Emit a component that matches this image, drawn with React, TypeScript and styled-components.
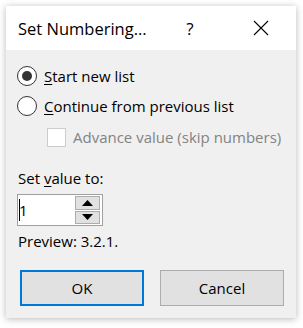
import React from 'react';
import styled, { createGlobalStyle } from 'styled-components';

const GlobalStyle = createGlobalStyle`
  html, body {
    margin: 0;
    padding: 0;
    background: #ffffff;
  }
  body {
    font-family: "Open Sans", "Noto Sans", sans-serif;
    color: #000000;
    line-height: 20px;
  }
`;

const Underline: React.FC<{ children: React.ReactNode }> = ({ children }) => (
  <AccessKey>{children}</AccessKey>
);

const Radio: React.FC<{ checked?: boolean; label: React.ReactNode }> = ({ checked, label }) => (
  <OptionRow>
    <RadioCircle>{checked && <RadioDot/>}</RadioCircle>
    <OptionLabel>{label}</OptionLabel>
  </OptionRow>
);

export default function App() {
  return (
    <>
      <GlobalStyle/>
      <Page>
        <Dialog>
          <TitleBar>
            <Title>Set Numbering...</Title>
            <HelpButton>?</HelpButton>
            <CloseButton>
              <svg width="16" height="16" viewBox="0 0 16 16">
                <path d="M1 1 L15 15 M15 1 L1 15" stroke="#000" strokeWidth="1.1" fill="none"/>
              </svg>
            </CloseButton>
          </TitleBar>
          <Body>
            <Radio checked label={<><Underline>S</Underline>tart new list</>}/>
            <Radio label={<><Underline>C</Underline>ontinue from previous list</>}/>
            <SubOption>
              <CheckBox/>
              <DisabledLabel>Advance value (skip numbers)</DisabledLabel>
            </SubOption>
            <FieldLabel>Set <Underline>v</Underline>alue to:</FieldLabel>
            <SpinBox>
              <SpinInput>
                <Caret/>1
              </SpinInput>
              <SpinButtons>
                <SpinButton>
                  <svg width="11" height="6" viewBox="0 0 11 6"><path d="M5.5 0 L11 6 L0 6 Z" fill="#000"/></svg>
                </SpinButton>
                <SpinButton>
                  <svg width="11" height="6" viewBox="0 0 11 6"><path d="M0 0 L11 0 L5.5 6 Z" fill="#000"/></svg>
                </SpinButton>
              </SpinButtons>
            </SpinBox>
            <Preview>Preview: 3.2.1.</Preview>
            <ButtonRow>
              <DialogButton primary>OK</DialogButton>
              <DialogButton>Cancel</DialogButton>
            </ButtonRow>
          </Body>
        </Dialog>
      </Page>
    </>
  );
}

const Page = styled.div`
    width: 303px;
    height: 328px;
    padding: 6px 7px 10px 6px;
    box-sizing: border-box;
  `,
  Dialog = styled.div`
    width: 290px;
    height: 312px;
    background: #f0f0f0;
    box-shadow: 0 1px 7px rgba(0, 0, 0, 0.28);
    display: flex;
    flex-direction: column;
  `,
  TitleBar = styled.div`
    height: 44px;
    flex: none;
    background: #ffffff;
    display: flex;
    align-items: center;
    padding: 0 0 0 12px;
  `,
  Title = styled.div`
    font-size: 16.5px;
    flex: 1;
    padding-top: 1px;
  `,
  HelpButton = styled.div`
    font-size: 17px;
    width: 46px;
    text-align: center;
    margin-right: 25px;
    padding-top: 1px;
  `,
  CloseButton = styled.div`
    width: 46px;
    display: flex;
    justify-content: center;
    margin-right: 12px;
  `,
  Body = styled.div`
    flex: 1;
    display: flex;
    flex-direction: column;
    padding: 16px 0 0 11px;
  `,
  OptionRow = styled.div`
    display: flex;
    align-items: center;
    height: 20px;
    margin-bottom: 10px;
    &:nth-child(2) {
      margin-bottom: 11px;
    }
  `,
  RadioCircle = styled.div`
    width: 18px;
    height: 18px;
    border: 1px solid #333333;
    border-radius: 50%;
    background: #ffffff;
    display: flex;
    align-items: center;
    justify-content: center;
    margin-right: 7px;
  `,
  RadioDot = styled.div`
    width: 10px;
    height: 10px;
    border-radius: 50%;
    background: #333333;
  `,
  OptionLabel = styled.span`
    font-size: 15px;
  `,
  AccessKey = styled.span`
    text-decoration: underline;
    text-underline-offset: 2px;
  `,
  SubOption = styled.div`
    display: flex;
    align-items: center;
    padding-left: 30px;
    height: 20px;
    margin-bottom: 21px;
  `,
  CheckBox = styled.div`
    width: 17px;
    height: 17px;
    border: 1px solid #cccccc;
    background: #ffffff;
    margin-right: 7px;
  `,
  DisabledLabel = styled.span`
    font-size: 15px;
    color: #838383;
  `,
  FieldLabel = styled.div`
    font-size: 15px;
    margin-left: 1px;
    margin-bottom: 6px;
  `,
  SpinBox = styled.div`
    width: 84px;
    height: 30px;
    border: 1px solid #a0a0a0;
    background: #ffffff;
    display: flex;
    align-items: stretch;
  `,
  SpinInput = styled.div`
    flex: 1;
    font-size: 15px;
    display: flex;
    align-items: center;
    padding-left: 1px;
  `,
  Caret = styled.span`
    display: inline-block;
    width: 1px;
    height: 22px;
    background: #000000;
    margin-right: -1px;
  `,
  SpinButtons = styled.div`
    width: 25px;
    display: flex;
    flex-direction: column;
    gap: 1px;
    padding: 1px 2px 1px 0;
  `,
  SpinButton = styled.div`
    flex: 1;
    background: #e1e1e1;
    border: 1px solid #adadad;
    display: flex;
    align-items: center;
    justify-content: center;
  `,
  Preview = styled.div`
    font-size: 15px;
    margin-top: 5px;
    margin-left: 1px;
  `,
  ButtonRow = styled.div`
    display: flex;
    gap: 16px;
    margin-top: 19px;
    padding-left: 3px;
  `,
  DialogButton = styled.div<{ primary?: boolean }>`
    width: 124px;
    height: 36px;
    box-sizing: border-box;
    background: #e1e1e1;
    border: ${p => p.primary ? '2px solid #0078d7' : '1px solid #adadad'};
    display: flex;
    align-items: center;
    justify-content: center;
    font-size: 15px;
  `;
